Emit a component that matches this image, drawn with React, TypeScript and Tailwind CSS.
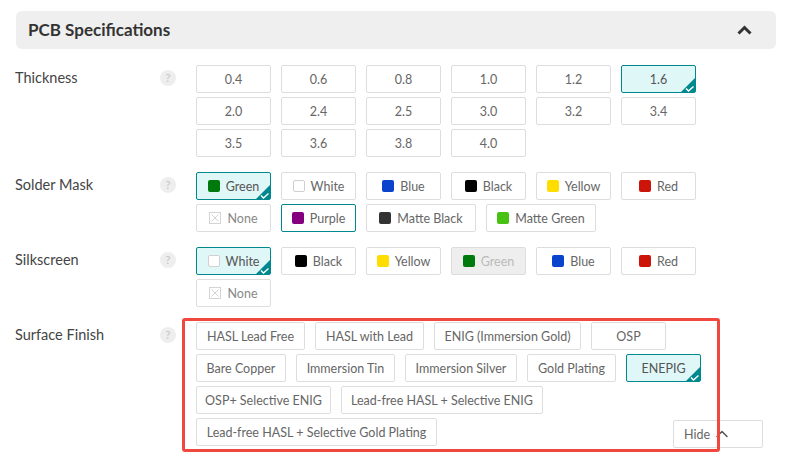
import { ChevronUp } from "lucide-react";

type Opt = {
  label: string;
  width: string;
  swatch?: string;
  selected?: boolean;
  disabled?: boolean;
  outlined?: boolean;
};

const thickness: Opt[] = [
  { label: "0.4", width: "w-[75px]" },
  { label: "0.6", width: "w-[75px]" },
  { label: "0.8", width: "w-[75px]" },
  { label: "1.0", width: "w-[75px]" },
  { label: "1.2", width: "w-[75px]" },
  { label: "1.6", width: "w-[75px]", selected: true },
  { label: "2.0", width: "w-[75px]" },
  { label: "2.4", width: "w-[75px]" },
  { label: "2.5", width: "w-[75px]" },
  { label: "3.0", width: "w-[75px]" },
  { label: "3.2", width: "w-[75px]" },
  { label: "3.4", width: "w-[75px]" },
  { label: "3.5", width: "w-[75px]" },
  { label: "3.6", width: "w-[75px]" },
  { label: "3.8", width: "w-[75px]" },
  { label: "4.0", width: "w-[75px]" },
];

const solderMask: Opt[] = [
  { label: "Green", width: "w-[75px]", swatch: "bg-[#007a0c]", selected: true },
  { label: "White", width: "w-[75px]", swatch: "white" },
  { label: "Blue", width: "w-[75px]", swatch: "bg-[#0a44cc]" },
  { label: "Black", width: "w-[75px]", swatch: "bg-black" },
  { label: "Yellow", width: "w-[75px]", swatch: "bg-[#ffdd00]" },
  { label: "Red", width: "w-[75px]", swatch: "bg-[#cc1508]" },
  { label: "None", width: "w-[75px]", swatch: "none", disabled: true },
  { label: "Purple", width: "w-[75px]", swatch: "bg-[#84007f]", outlined: true },
  { label: "Matte Black", width: "w-[110px]", swatch: "bg-[#333333]" },
  { label: "Matte Green", width: "w-[110px]", swatch: "bg-[#48c212]" },
];

const silkscreen: Opt[] = [
  { label: "White", width: "w-[75px]", swatch: "white", selected: true },
  { label: "Black", width: "w-[75px]", swatch: "bg-black" },
  { label: "Yellow", width: "w-[75px]", swatch: "bg-[#ffdd00]" },
  { label: "Green", width: "w-[75px]", swatch: "bg-[#007a0c]", disabled: true },
  { label: "Blue", width: "w-[75px]", swatch: "bg-[#0a44cc]" },
  { label: "Red", width: "w-[75px]", swatch: "bg-[#cc1508]" },
  { label: "None", width: "w-[75px]", swatch: "none", disabled: true },
];

const surfaceFinish: Opt[] = [
  { label: "HASL Lead Free", width: "w-[109px]" },
  { label: "HASL with Lead", width: "w-[109px]" },
  { label: "ENIG (Immersion Gold)", width: "w-[147px]" },
  { label: "OSP", width: "w-[75px]" },
  { label: "Bare Copper", width: "w-[90px]" },
  { label: "Immersion Tin", width: "w-[99px]" },
  { label: "Immersion Silver", width: "w-[112px]" },
  { label: "Gold Plating", width: "w-[89px]" },
  { label: "ENEPIG", width: "w-[75px]", selected: true },
  { label: "OSP+ Selective ENIG", width: "w-[135px]" },
  { label: "Lead-free HASL + Selective ENIG", width: "w-[202px]" },
  { label: "Lead-free HASL + Selective Gold Plating", width: "w-[241px]" },
];

function Swatch({ kind }: { kind: string }) {
  if (kind === "white") {
    return <span className="h-3 w-3 rounded-[2px] border border-[#d0d0d0] bg-white" />;
  }
  if (kind === "none") {
    return (
      <svg width="12" height="12" viewBox="0 0 12 12" fill="none" stroke="#d4d4d4">
        <rect x="0.5" y="0.5" width="11" height="11" />
        <path d="M2.5 2.5l7 7M9.5 2.5l-7 7" />
      </svg>
    );
  }
  return <span className={`h-3 w-3 rounded-[2px] ${kind}`} />;
}

function Corner() {
  return (
    <svg className="absolute right-0 bottom-0" width="14" height="14" viewBox="0 0 14 14">
      <path d="M14 0V14H0Z" fill="#00888f" />
      <path d="M5 10.5l2.5 2.5L12.5 8.5" fill="none" stroke="#fff" strokeWidth="1.4" />
    </svg>
  );
}

function Option({ opt }: { opt: Opt }) {
  let tone = "border-[#dddddd] text-[#666666]";
  if (opt.selected) tone = "border-[#00888f] bg-[#e0f7f8] text-[#555555]";
  if (opt.outlined) tone = "border-[#00888f] text-[#666666]";
  if (opt.disabled) tone = "border-[#dddddd] text-[#888888]";
  if (opt.disabled && opt.swatch !== "none") tone = "border-[#dddddd] bg-[#eeeeee] text-[#bbbbbb]";

  return (
    <div
      className={`relative flex h-[28px] items-center justify-center gap-[6px] rounded-[2px] border ${opt.width} ${tone}`}
    >
      {opt.swatch && <Swatch kind={opt.swatch} />}
      <span className="pt-[2px]">{opt.label}</span>
      {opt.selected && <Corner />}
    </div>
  );
}

function Row({ label, options }: { label: string; options: Opt[] }) {
  return (
    <div className="mb-[15px] flex">
      <div className="-ml-px w-[145px] pt-[3px] text-[14.5px] leading-[20px] text-[#444444]">{label}</div>
      <div className="mt-[5px] flex h-[16px] w-[16px] items-center justify-center rounded-full bg-[#eeeeee] text-[11px] text-[#c4c4c4]">
        ?
      </div>
      <div className="ml-[20px] flex w-[520px] flex-wrap content-start gap-x-[10px] gap-y-[4px] text-[12.5px]">
        {options.map((opt) => (
          <Option key={opt.label} opt={opt} />
        ))}
      </div>
    </div>
  );
}

export default function App() {
  return (
    <div className="relative h-[460px] w-[786px] overflow-hidden bg-white pt-[11px] pl-[16px] font-['Lato',sans-serif]">
      <div className="mb-[16px] flex h-[38px] w-[760px] items-center justify-between rounded-[6px] bg-[#efefef] pr-[24px] pl-[12px]">
        <span className="text-[17px] font-bold text-[#333333]">PCB Specifications</span>
        <svg width="15" height="10" viewBox="0 0 15 10" fill="none" stroke="#333333" strokeWidth="3">
          <path d="M1.5 8.5L7.5 2.5l6 6" />
        </svg>
      </div>
      <Row label="Thickness" options={thickness} />
      <Row label="Solder Mask" options={solderMask} />
      <Row label="Silkscreen" options={silkscreen} />
      <Row label="Surface Finish" options={surfaceFinish} />

      <div className="absolute top-[420px] left-[673px] flex h-[28px] w-[90px] items-center rounded-[2px] border border-[#dddddd] bg-white pl-[10px] text-[12.5px] text-[#666666]">
        <span className="pt-[2px]">Hide</span>
        <ChevronUp className="ml-[2px]" size={20} strokeWidth={1.8} color="#555555" />
      </div>
      <div className="absolute top-[318px] left-[182px] h-[134px] w-[538px] rounded-[3px] border-[3px] border-[#f0483e]" />
    </div>
  );
}
